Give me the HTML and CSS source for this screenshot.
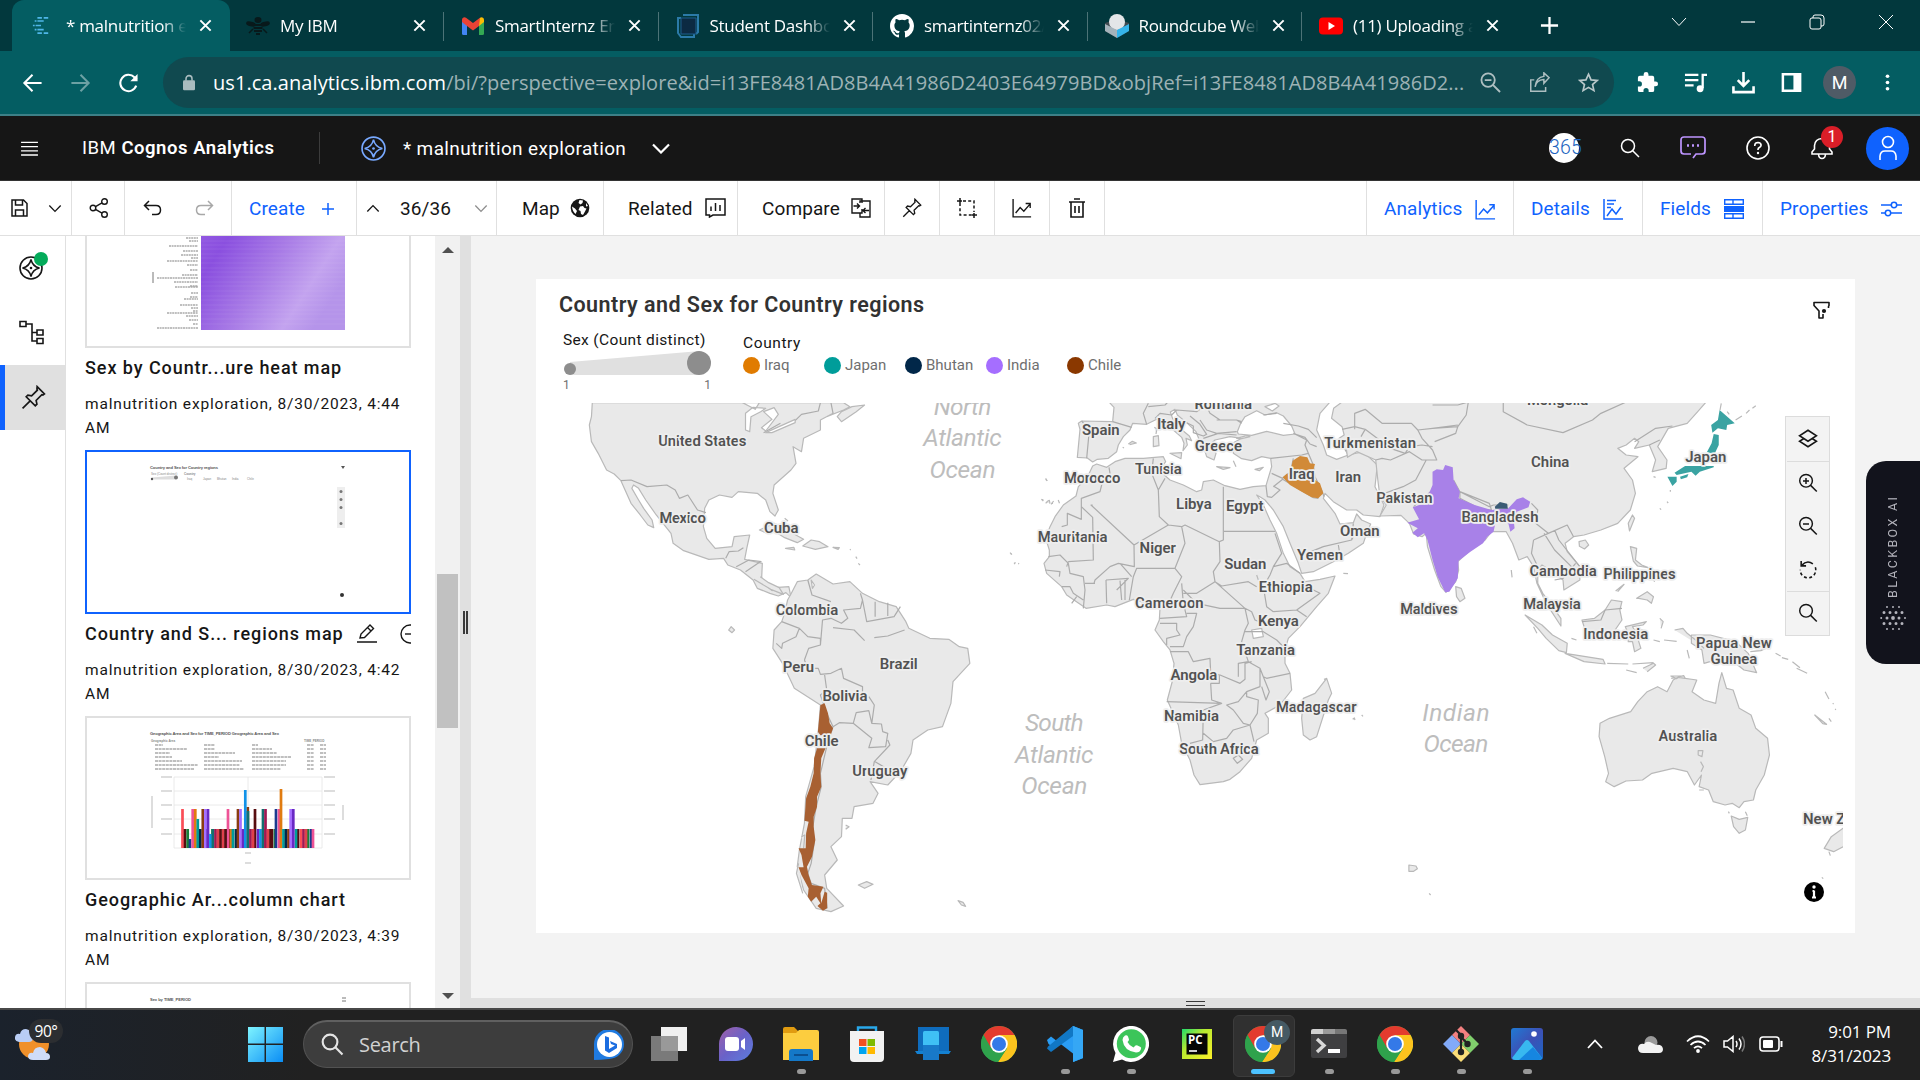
FILE: index.html
```html
<!DOCTYPE html>
<html lang="en">
<head>
<meta charset="utf-8">
<title>malnutrition exploration</title>
<link rel="stylesheet" href="styles.css">
</head>
<body>
<svg width="0" height="0" class="defs" aria-hidden="true">
  <defs>
    <linearGradient id="gWin" x1="0" y1="0" x2="1" y2="1"><stop offset="0" stop-color="#7ef4ff"/><stop offset="1" stop-color="#0a8df5"/></linearGradient>
    <linearGradient id="gChat" x1="0" y1="0" x2="1" y2="1"><stop offset="0" stop-color="#a05fa8"/><stop offset=".5" stop-color="#6a62c8"/><stop offset="1" stop-color="#5a7fe0"/></linearGradient>
    <linearGradient id="gPhoto" x1="0" y1="0" x2="1" y2="1"><stop offset="0" stop-color="#1f7ad4"/><stop offset=".5" stop-color="#3d50b5"/><stop offset="1" stop-color="#1a66c4"/></linearGradient>
    <linearGradient id="gPy" x1="0" y1="0" x2="1" y2="1"><stop offset="0" stop-color="#1edb6c"/><stop offset=".4" stop-color="#b8ea30"/><stop offset="1" stop-color="#fcf02a"/></linearGradient>
    <linearGradient id="gHeat" x1="0" y1="0" x2="1" y2=".65"><stop offset="0" stop-color="#9a62e4"/><stop offset=".3" stop-color="#8a4fdf"/><stop offset=".6" stop-color="#a87be6"/><stop offset=".85" stop-color="#c3a3ef"/><stop offset="1" stop-color="#b594ea"/></linearGradient>
    <symbol id="close" viewBox="0 0 16 16"><path d="M2.5 2.5l11 11M13.500 2.500l-11 11" stroke="currentColor" stroke-width="2.1" fill="none"/></symbol>
    <symbol id="explore" viewBox="0 0 24 24"><circle cx="12" cy="12" r="11" fill="none" stroke="currentColor" stroke-width="1.6"/><path d="M12 3.500Q13.500 10.500 20.500 12Q13.500 13.500 12 20.500Q10.500 13.500 3.500 12Q10.500 10.500 12 3.500z" fill="none" stroke="currentColor" stroke-width="1.5"/><circle cx="12" cy="12" r="1.300" fill="currentColor"/></symbol>
    <symbol id="pin" viewBox="0 0 24 24"><path d="M15.500 1.500l7 7-1.500 1.200-1-.4-5.500 5.500.8 3.600-1.600 1.600-8.700-8.700 1.600-1.600 3.600.8 5.500-5.500-.4-1zM9.300 14.700L1.500 22.500" fill="none" stroke="currentColor" stroke-width="1.6"/></symbol>
    <symbol id="mag" viewBox="0 0 20 20"><circle cx="8" cy="8" r="6.500" fill="none" stroke="currentColor" stroke-width="1.500"/><path d="M12.700 12.700L19 19" stroke="currentColor" stroke-width="1.500"/></symbol>
    <symbol id="down" viewBox="0 0 16 10"><path d="M1.500 1.500L8 8.300l6.500-6.800" fill="none" stroke="currentColor" stroke-width="1.500"/></symbol>
    <symbol id="trend" viewBox="0 0 22 22"><path d="M1.200 1v19.800H21M4 16.500l5-6 4 4 7-8M15 6h5v5" fill="none" stroke="currentColor" stroke-width="1.500"/></symbol>
    <symbol id="chrome" viewBox="0 0 36 36"><circle cx="18" cy="18" r="18" fill="#2fa24c"/><path d="M2.400 9A18 18 0 0 1 33.600 9L18 9 10.200 22.500z" fill="#e33b2e"/><path d="M33.600 9A18 18 0 0 1 17 36L25.800 22.500 18 9z" fill="#fcc31e"/><path d="M2.400 9A18 18 0 0 0 17 36L25.800 22.500H10.200z" fill="#2fa24c"/><circle cx="18" cy="18" r="8.800" fill="#fff"/><circle cx="18" cy="18" r="7" fill="#3479e8"/></symbol>
  </defs>
</svg>

<div class="screen">
  <header class="tabs">
    <div class="tab active">
      <svg class="fav" viewBox="0 0 20 20"><path d="M6 1.500h5M13 1.500h5M3 5h2M6 5h7M1 10h2M4 10h6M3 14.500h2M6 14.500h7M6 18.500h5M13 18.500h5" stroke="#4fb6e8" stroke-width="1.900"/></svg>
      <span class="name">* malnutrition exp</span><svg class="x"><use href="#close"/></svg>
    </div>
    <div class="tab"><svg class="fav" viewBox="0 0 24 20"><g fill="#08191b"><ellipse cx="12" cy="4" rx="3.500" ry="3"/><ellipse cx="5" cy="8" rx="5" ry="2.400" transform="rotate(15 5 8)"/><ellipse cx="19" cy="8" rx="5" ry="2.400" transform="rotate(-15 19 8)"/><path d="M8 8h8v2H8zM7.500 11h9v2h-9zM8 14h8v2H8zM10 17h4v2h-4z"/></g><path d="M7 13l-4 4M17 13l4 4" stroke="#08191b" stroke-width="1.500"/></svg><span class="name">My IBM</span><svg class="x"><use href="#close"/></svg></div>
    <div class="tab"><svg class="fav" viewBox="0 0 24 18"><path d="M1 3v13.500A1.500 1.500 0 0 0 2.500 18H6V7z" fill="#4285f4"/><path d="M23 3v13.500a1.500 1.500 0 0 1-1.500 1.500H18V7z" fill="#34a853"/><path d="M18 2.500V9l5-4V2.800C23 .6 20.600-.4 19 .8z" fill="#fbbc04"/><path d="M1 5V2.800C1 .6 3.400-.4 5 .8l7 5.300 7-5.300-1 8.200-6 4.500L6 9z" fill="#ea4335"/></svg><span class="name">SmartInternz Em</span><svg class="x"><use href="#close"/></svg></div>
    <div class="tab"><svg class="fav tall" viewBox="0 0 24 24"><path d="M7 1h15v17l-2 2M5 4H2v15l3 4h13v-3" fill="none" stroke="#2b7aa8" stroke-width="2"/><path d="M5 4h15v16H5z" fill="#0c2a42" stroke="#1d5c8c"/></svg><span class="name">Student Dashbo</span><svg class="x"><use href="#close"/></svg></div>
    <div class="tab"><svg class="fav tall" viewBox="0 0 16 16"><path fill="#fff" d="M8 0C3.580 0 0 3.580 0 8c0 3.540 2.290 6.530 5.470 7.590.4.070.55-.17.55-.38 0-.19-.01-.82-.01-1.490-2.010.37-2.530-.49-2.690-.94-.09-.23-.48-.94-.82-1.130-.28-.15-.68-.52-.01-.53.63-.01 1.080.58 1.230.82.72 1.210 1.870.87 2.330.66.070-.52.28-.87.51-1.070-1.780-.2-3.640-.89-3.640-3.950 0-.87.31-1.590.82-2.150-.08-.2-.36-1.020.08-2.120 0 0 .67-.21 2.200.82a7.600 7.600 0 0 1 4 0c1.530-1.040 2.200-.82 2.200-.82.44 1.100.16 1.920.08 2.120.51.56.82 1.270.82 2.150 0 3.070-1.870 3.750-3.650 3.950.29.25.54.73.54 1.480 0 1.070-.01 1.930-.01 2.200 0 .21.15.46.55.38A8 8 0 0 0 16 8c0-4.420-3.580-8-8-8z"/></svg><span class="name">smartinternz02/</span><svg class="x"><use href="#close"/></svg></div>
    <div class="tab"><svg class="fav tall" viewBox="0 0 24 24"><path d="M0 9l12-4 12 4v8l-12 7L0 17z" fill="#3f4a50"/><circle cx="12" cy="8" r="8" fill="#e4e6e8"/><path d="M0 10l12 6v8L0 17z" fill="#a5b3bb"/><path d="M24 10l-12 6v8l12-7z" fill="#35b4ea"/></svg><span class="name">Roundcube Web</span><svg class="x"><use href="#close"/></svg></div>
    <div class="tab"><svg class="fav" viewBox="0 0 24 17"><rect width="24" height="17" rx="4" fill="#f00"/><path d="M9.500 4.500v8l6.500-4z" fill="#fff"/></svg><span class="name">(11) Uploading a</span><svg class="x"><use href="#close"/></svg></div>
    <svg class="newtab" viewBox="0 0 20 20"><path d="M10 1v18M1 10h18" stroke="#fff" stroke-width="2.400"/></svg>
    <div class="winbtns">
      <svg viewBox="0 0 16 10"><path d="M1 1l7 7.500L15 1" fill="none" stroke="#fff"/></svg>
      <svg viewBox="0 0 16 10"><path d="M1 5h14" stroke="#fff" stroke-width="1.200"/></svg>
      <svg viewBox="0 0 16 16"><rect x="1" y="4" width="11" height="11" rx="2" fill="none" stroke="#fff"/><path d="M4 4V3q0-2 2-2h6q3 0 3 3v6q0 2-2 2h-1" fill="none" stroke="#fff"/></svg>
      <svg viewBox="0 0 16 16"><path d="M1 1l14 14M15 1L1 15" stroke="#fff"/></svg>
    </div>
  </header>

  <div class="addr">
    <svg class="nav" viewBox="0 0 22 22"><path d="M21 11H2M11 2l-9 9 9 9" fill="none" stroke="#fff" stroke-width="2.200"/></svg>
    <svg class="nav dim" viewBox="0 0 22 22"><path d="M1 11h19M11 2l9 9-9 9" fill="none" stroke="#fff" stroke-width="2.200"/></svg>
    <svg class="nav" viewBox="0 0 22 22"><path d="M19.500 14A9 9 0 1 1 17.500 4.700L20 7" fill="none" stroke="#fff" stroke-width="2.300"/><path d="M21 1v8h-8z" fill="#fff"/></svg>
    <div class="omni">
      <svg class="lock" viewBox="0 0 14 18"><rect y="6.500" width="14" height="11.500" rx="1.500" fill="#a9bcbf"/><path d="M3.500 7V4.500a3.500 3.500 0 0 1 7 0V7" fill="none" stroke="#a9bcbf" stroke-width="1.800"/></svg>
      <span class="url"><b>us1.ca.analytics.ibm.com</b>/bi/?perspective=explore&amp;id=i13FE8481AD8B4A41986D2403E64979BD&amp;objRef=i13FE8481AD8B4A41986D2...</span>
      <svg class="oi" viewBox="0 0 22 22"><circle cx="8.500" cy="8.500" r="7" fill="none" stroke="#aebfc1" stroke-width="1.900"/><path d="M13.500 13.500L21 21M5 8.500h7" stroke="#aebfc1" stroke-width="2"/></svg>
      <svg class="oi" viewBox="0 0 24 22"><path d="M6 8H2v13h17v-5M7 16q1-8 10-8.500V12l6-6.500L17 0v4Q8 5 7 16z" fill="none" stroke="#aebfc1" stroke-width="1.700"/></svg>
      <svg class="oi" viewBox="0 0 24 24"><path d="M12 2.500l2.900 6.500 7 .6-5.300 4.700 1.600 7-6.200-3.700-6.200 3.700 1.600-7L2.100 9.600l7-.6z" fill="none" stroke="#b9c8ca" stroke-width="1.900"/></svg>
    </div>
    <svg class="ext" viewBox="0 0 24 24"><path fill="#fff" d="M20.500 11H19V7a2 2 0 0 0-2-2h-4V3.500a2.500 2.500 0 0 0-5 0V5H4a2 2 0 0 0-2 2v3.800h1.500a2.700 2.700 0 0 1 0 5.400H2V20a2 2 0 0 0 2 2h3.800v-1.500a2.700 2.700 0 0 1 5.400 0V22H17a2 2 0 0 0 2-2v-4h1.500a2.500 2.500 0 0 0 0-5z"/></svg>
    <svg class="ext" viewBox="0 0 24 24"><path d="M1 4h14M1 9.500h14M1 15h9M19.500 18V4H24" fill="none" stroke="#fff" stroke-width="2.400"/><circle cx="16.800" cy="18.500" r="3.600" fill="#fff"/></svg>
    <svg class="ext" viewBox="0 0 24 24"><path d="M12 1v14M6 9.500l6 6 6-6M1.500 16v6h21v-6" fill="none" stroke="#fff" stroke-width="2.700"/></svg>
    <svg class="ext" viewBox="0 0 24 24"><path d="M3 3.500h18v17H3z" fill="none" stroke="#fff" stroke-width="2.600"/><path d="M14 3h7v18h-7z" fill="#fff"/></svg>
    <span class="me">M</span>
    <svg class="ext dots" viewBox="0 0 6 20"><circle cx="3" cy="2.500" r="2.200" fill="#fff"/><circle cx="3" cy="10" r="2.200" fill="#fff"/><circle cx="3" cy="17.500" r="2.200" fill="#fff"/></svg>
  </div>

  <div class="appbar">
    <svg class="ham" viewBox="0 0 18 16"><path d="M0 1.500h18M0 6h18M0 10.500h18M0 15h18" stroke="#fff" stroke-width="1.500"/></svg>
    <span class="brand">IBM <b>Cognos Analytics</b></span>
    <svg class="docicon"><use href="#explore"/></svg>
    <span class="doc">* malnutrition exploration</span>
    <svg class="docchev" viewBox="0 0 18 11"><path d="M1 1.500l8 8 8-8" fill="none" stroke="#fff" stroke-width="2.200"/></svg>
    <div class="appright">
      <span class="c365">365</span>
      <svg width="20" height="20"><use href="#mag"/></svg>
      <svg width="26" height="24" viewBox="0 0 26 24" class="lav"><path d="M13 22l3-4h6q3 0 3-3V4q0-3-3-3H4Q1 1 1 4v11q0 3 3 3h7" fill="none" stroke="currentColor" stroke-width="1.700"/><path d="M7 9.500h2M12 9.500h2M17 9.500h2" stroke="currentColor" stroke-width="2.500"/></svg>
      <svg width="24" height="24" viewBox="0 0 24 24"><circle cx="12" cy="12" r="11" fill="none" stroke="#fff" stroke-width="1.600"/><path d="M8.800 10V9q.3-2.500 3.200-2.500 3 .1 3.100 2.600-.1 1.600-1.700 2.300-1.400.6-1.400 2V14" fill="none" stroke="#fff" stroke-width="1.600"/><circle cx="12" cy="17" r="1.200" fill="#fff"/></svg>
      <span class="bell"><svg width="24" height="24" viewBox="0 0 24 24"><path d="M2 18v-2l2.500-3V9.500q.5-6.500 7.500-7 7 .5 7.500 7V13l2.500 3v2zM8.500 18.500q.5 4 3.500 4t3.500-4" fill="none" stroke="#fff" stroke-width="1.600"/></svg><i>1</i></span>
      <span class="avatar"><svg width="22" height="26" viewBox="0 0 22 26"><circle cx="11" cy="7" r="5.500" fill="none" stroke="#fff" stroke-width="1.600"/><path d="M3 25v-4q.5-5 5-5h6q4.500 0 5 5v4" fill="none" stroke="#fff" stroke-width="1.600"/></svg></span>
    </div>
  </div>

  <div class="toolbar">
    <div class="cell c-save"><svg width="17" height="18" viewBox="0 0 17 18"><path d="M1 1h11.500L16 4.500V17H1zM4.500 1v5h7V1M4.500 17v-6h8v6" fill="none" stroke="#161616" stroke-width="1.500"/></svg><svg width="14" height="9"><use href="#down"/></svg></div>
    <div class="cell c-share"><svg width="20" height="20" viewBox="0 0 20 20"><circle cx="4" cy="10" r="2.800" fill="none" stroke="#161616" stroke-width="1.400"/><circle cx="15.500" cy="3.500" r="2.800" fill="none" stroke="#161616" stroke-width="1.400"/><circle cx="15.500" cy="16.500" r="2.800" fill="none" stroke="#161616" stroke-width="1.400"/><path d="M6.500 8.600l6.500-3.700M6.500 11.400l6.500 3.700" stroke="#161616" stroke-width="1.400"/></svg></div>
    <div class="cell c-undo"><svg width="19" height="16" viewBox="0 0 19 16"><path d="M6 1L1.500 5.500 6 10M2 5.500h11q4.500 0 4.500 4.500t-4.500 4.500H9" fill="none" stroke="#161616" stroke-width="1.500"/></svg><svg width="19" height="16" viewBox="0 0 19 16" class="flip"><path d="M6 1L1.500 5.500 6 10M2 5.500h11q4.500 0 4.500 4.500t-4.500 4.500H9" fill="none" stroke="#a8a8a8" stroke-width="1.500"/></svg></div>
    <div class="cell c-create blue"><span>Create</span><svg width="12" height="12" viewBox="0 0 12 12"><path d="M6 0v12M0 6h12" stroke="currentColor" stroke-width="1.500"/></svg></div>
    <div class="cell c-count"><svg width="14" height="9" class="up"><use href="#down"/></svg><span>36/36</span><svg width="14" height="9" class="dis"><use href="#down"/></svg></div>
    <div class="cell c-map"><span>Map</span><svg width="20" height="20" viewBox="0 0 20 20"><circle cx="10" cy="10" r="9.300" fill="#161616"/><path d="M9.500 2l3.500.5-.5 2.500-2 1.500-2-1.500zM10 8.500l3-.5 1.500 2 2 .5-1.500 3-2 3.500-2-1-.5-3-2-1zM16 5l2 3-2 .5zM2 8.500l3 2 2 2.500-1.500 3Q2.500 13.500 2 8.500z" fill="#fff"/></svg></div>
    <div class="cell c-rel"><span>Related</span><svg width="21" height="20" viewBox="0 0 21 20"><path d="M1 1h19v16H8l-3.500 2v-2H1zM6 13V8.500M10.500 13V5M15 13V7" fill="none" stroke="#161616" stroke-width="1.500"/></svg></div>
    <div class="cell c-cmp"><span>Compare</span><svg width="20" height="20" viewBox="0 0 20 20"><path d="M11 5V1H1v14h10v-4M9 5V3h10v16H9v-4M2.500 8H8M6 5.500L8.500 8 6 10.500M18 12.500h-6M14.500 10L12 12.500l2.500 2.500" fill="none" stroke="#161616" stroke-width="1.400"/></svg></div>
    <div class="cell sq"><svg width="20" height="20"><use href="#pin"/></svg></div>
    <div class="cell sq"><svg width="20" height="20" viewBox="0 0 20 20"><path d="M3 5v12h12M6 3h11v11" fill="none" stroke="#161616" stroke-width="1.500" stroke-dasharray="3 2.200"/><path d="M0 3h5M3 0v5M15 17h5M17 15v5" fill="none" stroke="#161616" stroke-width="1.500"/></svg></div>
    <div class="cell sq"><svg width="20" height="20"><use href="#trend"/></svg></div>
    <div class="cell sq"><svg width="18" height="20" viewBox="0 0 18 20"><path d="M1 4h16M3 4v15h12V4M6 1h6M7 8v7M11 8v7" fill="none" stroke="#161616" stroke-width="1.600"/></svg></div>
    <div class="grow"></div>
    <div class="cell r r1 blue"><span>Analytics</span><svg width="21" height="21"><use href="#trend"/></svg></div>
    <div class="cell r r2 blue"><span>Details</span><svg width="20" height="21" viewBox="0 0 20 21"><path d="M1 0v20h19M4 1.500h9M4 5h7M4 8.500h4M4 17l5-7 4 5 5-7" fill="none" stroke="currentColor" stroke-width="1.500"/></svg></div>
    <div class="cell r r3 blue"><span>Fields</span><svg width="20" height="20" viewBox="0 0 20 20"><path d="M.7.700h18.600v4.500H.7zM9 1v4M.7 14.800h18.600v4.500H.7zM9 15v4" fill="none" stroke="currentColor" stroke-width="1.400"/><path d="M0 7h20v6H0z" fill="currentColor"/></svg></div>
    <div class="cell r r4 blue"><span>Properties</span><svg width="21" height="16" viewBox="0 0 21 16"><path d="M0 4h10M16 4h5M0 12h4M10 12h11" stroke="currentColor" stroke-width="1.500"/><circle cx="13" cy="4" r="2.700" fill="none" stroke="currentColor" stroke-width="1.500"/><circle cx="7" cy="12" r="2.700" fill="none" stroke="currentColor" stroke-width="1.500"/></svg></div>
  </div>

  <main class="main">
    <nav class="rail">
      <span class="rbtn dot"><svg width="24" height="24"><use href="#explore"/></svg></span>
      <span class="rbtn"><svg width="25" height="25" viewBox="0 0 25 25"><path d="M1 1.500h6v5H1zM18 10h6v5h-6zM18 18.500h6v5h-6zM7 4h6v17h5M13 12.500h5" fill="none" stroke="#161616" stroke-width="1.600"/></svg></span>
      <span class="rbtn sel"><svg width="25" height="25"><use href="#pin"/></svg></span>
    </nav>
    <section class="pins">
      <article>
        <svg class="thumb" viewBox="2 2 322 160"><rect x="116" width="144" height="146" fill="url(#gHeat)"/><path d="M116 57H260M116 61H260M116 65H260M116 70H260M116 74H260M116 79H260M116 84H260M116 88H260M116 93H260M116 98H260M116 102H260M116 107H260M116 112H260M116 116H260M116 121H260M116 126H260M116 130H260M116 135H260M116 140H260" stroke="#fff" stroke-opacity=".07"/><path d="M101 54h12M104 57h9M84 62h29M98 67h15M96 71h17M106 74h7M82 77h31M102 81h11M105 86h8M97 91h16M72 94h41M89 98h24M105 102h8M90 103h23M106 109h7M105 113h8M99 115h14M95 121h18M106 124h7M108 127h5M82 129h31M101 132h12M104 136h9M108 140h5M72 144h41" stroke="#aaa" stroke-width="1.400" stroke-dasharray="2 .6"/><path d="M68 88v11" stroke="#777"/></svg>
        <h3>Sex by Countr...ure heat map</h3><p>malnutrition exploration, 8/30/2023, 4:44<br>AM</p>
      </article>
      <article>
        <svg class="thumb sel" viewBox="2 2 322 160"><text x="65" y="18.500" class="tt" textLength="68">Country and Sex for Country regions</text><text x="66" y="25" class="ts">Sex (Count distinct)</text><text x="99" y="25" class="ts b">Country</text><path d="M67 27.500l24-2v4H67z" fill="#ddd"/><circle cx="67" cy="29" r="1.200" fill="#555"/><circle cx="91" cy="27.500" r="2" fill="#777"/><g class="ts"><text x="102" y="29.500">Iraq</text><text x="118" y="29.500">Japan</text><text x="132" y="29.500">Bhutan</text><text x="147" y="29.500">India</text><text x="162" y="29.500">Chile</text></g><path d="M256 16h4l-2 3z" fill="#555"/><path d="M252 37h8v41h-8z" fill="#eee"/><g fill="#777"><circle cx="256" cy="41.500" r="1.500"/><circle cx="256" cy="49.500" r="1.500"/><circle cx="256" cy="57.500" r="1.500"/><circle cx="256" cy="73.500" r="1.500"/></g><circle cx="257" cy="145" r="2" fill="#333"/></svg>
        <h3>Country and S... regions map <svg width="20" height="19" viewBox="0 0 20 19" class="pen"><path d="M0 18h20M3 14l1-4 9-9 3.500 3.500-9 9zM10.500 3.500L14 7" fill="none" stroke="#161616" stroke-width="1.400"/></svg><svg width="11" height="20" viewBox="0 0 11 20"><circle cx="10" cy="10" r="9" fill="none" stroke="#161616" stroke-width="1.400"/><path d="M5 10h6" stroke="#161616" stroke-width="1.400"/></svg></h3><p>malnutrition exploration, 8/30/2023, 4:42<br>AM</p>
      </article>
      <article>
        <svg class="thumb" viewBox="2 2 322 160"><text x="65" y="19" class="tt" textLength="129">Geographic Area and Sex for TIME_PERIOD Geographic Area and Sex</text><text x="66" y="26" class="ts b">Geographic Area</text><text x="219" y="26" class="ts b">TIME_PERIOD</text><path d="M70 29h8M119 29h11M167 29h6M222 29h7M235 29h6M70 33h32M119 33h11M167 33h20M222 33h7M235 33h6M70 37h15M119 37h31M167 37h25M222 37h7M235 37h6M70 41h17M119 41h15M167 41h39M222 41h7M235 41h6M70 45h27M119 45h38M167 45h34M222 45h7M235 45h6M70 49h43M119 49h36M167 49h34M222 49h7M235 49h6M70 53h39M119 53h40M167 53h29M222 53h7M235 53h6" stroke="#aaa" stroke-width="1.400" stroke-dasharray="3 .6"/><path d="M89 61h148M89 75h148M89 89h148M89 103h148M89 118h148M89 61v71h148V61M163 61v71" fill="none" stroke="#e4e4e4" stroke-width=".8"/><path d="M76 61h11M76 75h11M76 89h11M76 103h11M76 118h11M239 61h11M239 75h11M239 89h11M239 103h11M239 118h11M160 137h6M160 147h6M67 80v32M258 89v15" stroke="#bbb"/>
        <g stroke-width="2.700"><path d="M97.500 132V93M180 132V113M206 132V113M216 132V113" stroke="#fa4d56"/><path d="M100 132V113M110 132V113M145 132V113M170 132V93M187 132V113M213 132V113" stroke="#570d10"/><path d="M102.700 132V113M127.500 132V113M190 132V113M223 132V113" stroke="#198038"/><path d="M105 132V123M122 132V113M142.500 132V113M191 132V93M226 132V113" stroke="#1a3a8f"/><path d="M107.700 132V93M143 132V93M194 132V93M228 132V113" stroke="#ee5396"/><path d="M110.300 132V93M196 132V73M146 132V113" stroke="#e07b10"/><path d="M112.800 132V103M148 132V113M198.500 132V113M211 132V113" stroke="#009d9a"/><path d="M115.300 132V113M151 132V113M201 132V113" stroke="#012749"/><path d="M117.800 132V93M153 132V93M203.500 132V113M162.800 132V91" stroke="#8a3c10"/><path d="M120.400 132V93M155.500 132V93M205.700 132V93" stroke="#a56eff"/><path d="M123 132V93M158 132V113M208.300 132V93M173 132V113" stroke="#6929c4"/><path d="M125.500 132V118M160.300 132V74M175.500 132V113" stroke="#1192e8"/><path d="M128 132V113M163 132V95M178 132V93" stroke="#147070"/><path d="M130.500 132V113M165.500 132V113M180.500 132V93M218.500 132V113" stroke="#9f1853"/><path d="M133 132V113M138 132V113M168 132V113M183 132V113M221 132V113" stroke="#e0404c"/><path d="M135.500 132V113M140.500 132V113M185.500 132V113" stroke="#570d10"/></g></svg>
        <h3>Geographic Ar...column chart</h3><p>malnutrition exploration, 8/30/2023, 4:39<br>AM</p>
      </article>
      <article>
        <svg class="thumb" viewBox="2 2 322 160"><text x="65" y="19" class="tt" textLength="41">Sex by TIME_PERIOD</text><path d="M257 16h4M257 19h4" stroke="#777"/></svg>
      </article>
    </section>
    <div class="sbar"><i class="au"></i><i class="th"></i><i class="ad"></i></div>
    <div class="split"><i></i></div>
    <section class="work">
      <div class="canvas">
        <div class="card">
          <div class="chead"><h2>Country and Sex for Country regions</h2><svg width="17" height="19" viewBox="0 0 17 19"><path d="M15.500 7V5.500L16 4.500v-3H1v3l5 5.500v7h4v-4" fill="none" stroke="#161616" stroke-width="1.600" stroke-linejoin="round"/><circle cx="11" cy="10" r="2.100" fill="#161616"/></svg></div>
          <div class="legend">
            <div class="size"><span class="lt">Sex (Count distinct)</span>
              <svg width="150" height="26" viewBox="0 0 150 26"><path d="M7 12L137 1v24H7z" fill="#e0e0e0"/><circle cx="7" cy="19" r="6" fill="#8d8d8d"/><circle cx="136" cy="13" r="12" fill="#8d8d8d"/></svg>
              <div class="ends"><span>1</span><span>1</span></div></div>
            <div class="cats"><span class="lt">Country</span>
              <div class="items"><span class="k1">Iraq</span><span class="k2">Japan</span><span class="k3">Bhutan</span><span class="k4">India</span><span class="k5">Chile</span></div></div>
          </div>
          <svg class="map" viewBox="536 403 1307 530">
            <g class="land">
              <!-- North and Central America -->
              <g transform="translate(530 270) scale(.4209 .33333)">
                <path d="M148 398L146 440 141 465 146 515 162 550 182 600 200 612 216 632 240 700 262 735 280 765 294 773 290 750 270 715 258 690 242 655 246 645 258 655 275 690 300 735 335 790 340 820 365 842 425 868 460 865 470 885 500 900 530 930 540 955 570 970 590 978 608 968 620 982 615 950 590 952 575 962 550 935 552 880 510 868 515 835 522 795 485 800 480 830 440 835 420 805 412 770 415 715 425 690 450 675 480 682 495 665 540 670 560 690 570 725 582 738 590 720 577 670 580 645 620 600 632 580 625 530 645 545 650 505 690 480 690 450 720 430 705 440 745 420 760 410 745 398z"/>
                <path d="M730 440L740 425 765 410 795 405 775 425 740 455zM545 780l35-20 30 20 40 28-15 10-30-15-25-20-20 5zM648 828l20-18 20 5 20 15-30 8zM607 835l20-3 2 8zM720 832l15 1-3 5zM605 745l8 8M760 838l2 2M774 860l3 6M780 880l4 5M1225 625l4 8M1215 688l5 2M1225 700l8-8M1238 703l6-10M1255 690l3 10M1142 850l3 4M1150 880l2 2M1160 880l2 2"/>
                <path class="b" d="M216 632L240 630 278 650 325 645 345 660 355 685 375 675 398 720 418 728M465 865l8-20 22-2 12-10M490 890l30-20 30 5M512 905l35-30M535 930l20 2M690 398l-5 25-40 10-20 25-55 25M720 430l-5-32M595 460l-40 28"/>
                <path class="w" d="M512 430L530 412 560 415 548 425 525 440 522 485 512 480zM555 425l25-12 10 20-30 50-10-10 25-25zM560 488l70-40 0 10-55 30zM545 398h-40l30 20z"/>
              </g>
              <!-- South America -->
              <g transform="translate(530 580) scale(.4209 .33333)">
                <path d="M620 42L612 60 605 100 598 125 580 150 577 205 600 250 628 325 690 375 686 440 675 560 655 650 652 730 640 810 635 860 650 930 680 985 715 995 745 978 705 925 700 885 730 840 715 800 740 770 742 715 765 715 770 680 815 670 827 640 808 605 850 615 880 575 905 520 910 480 945 450 980 440 1000 370 1005 305 1045 250 1040 205 1020 200 995 178 950 175 900 145 893 125 870 80 830 65 790 40 760 5 720 12 680-18 660 0 635 5z"/>
                <path d="M472 150l6-10 8 10-6 8zM532-2l40 30 30 15-10-20-25-15-20-18M780 915l20-10 15 8-20 12zM1017 962l12 5 6 12-10-4zM750 735l8 5-8 8M638 850l-5 30 15 60M645 770l8-5-3 40"/>
                <path class="b" d="M660 0L670 45 715 65M598 125L640 145 632 170 600 190 598 205 585 190M640 145L660 170 690 175 690 195 662 205 652 240M690 195L695 120 715 115 740 130 755 115 745 90 785 85 790 60 785 40M790 60L800 125 865 110 880 80M820 65v45M850 68v40M652 240L660 265 685 265 690 283 715 280 740 265 745 295 790 320 790 345M700 285L705 330 690 345 705 400 720 440M805 350L818 375 812 430M720 440L735 428 768 430 775 398 805 392 812 430 835 432 838 455 850 460 845 500 805 503 812 475 768 430M850 480L855 495 818 545 810 600M820 545L860 575M720 440L705 500 690 580 692 620 680 680 672 740 675 790 668 850 660 880 668 910 700 925 706 985"/>
                <path class="b" d="M720 143L770 150 795 182M818 173L850 168 890 150"/>
                <path class="w2" d="M668 0l8 15-5 10z"/>
                <path fill="#a86032" stroke="none" d="M690 375L700 370 708 400 712 430 720 445 715 462 690 466 684 455zM682 505h20L692 535 690 580 692 620 682 650 682 680 674 710 674 740 678 780 670 830 658 860 662 885 670 915 697 920 690 940 692 970 700 935 706 938V985L696 992 683 978 690 970 680 950 668 965 660 950 662 925 645 885 638 862 650 862 645 825 638 805 655 805 656 760 662 725 652 722 656 655 666 620 674 580 675 535z"/>
              </g>
              <!-- Europe, Africa, Middle East -->
              <g transform="translate(1000 390) scale(.33333)">
                <path d="M327 36L342 52 338 95 245 93 235 100 240 118 232 202 262 204 278 216 292 208 325 205 350 185 355 165 370 140 390 120 398 100 440 103 470 88 482 85 495 103 520 120 545 142 552 160 549 182 562 165 558 145 575 152 568 138 540 115 520 92 511 66 525 58 532 75 560 98 588 125 598 150 612 175 620 200 642 210 648 190 630 165 645 150 690 140 725 145 700 158 700 190 725 206 755 212 785 200 812 205 815 230 806 260 798 287 760 290 720 298 675 287 640 270 610 275 605 300 590 305 550 285 510 270 493 255 485 232 497 215 490 200 430 205 375 205 345 215 320 232 290 222 278 228 262 262 235 290 228 318 190 345 165 380 150 410 137 445 148 480 148 500 132 520 140 550 185 590 200 615 258 655 320 645 345 650 400 628 440 640 480 655 478 690 465 720 490 755 510 780 522 820 518 870 502 930 535 1005 545 1060 570 1110 582 1155 600 1184 670 1175 690 1168 720 1145 755 1105 770 1050 805 1030 805 985 795 970 840 945 875 900 870 850 855 820 855 780 865 745 900 710 950 650 985 610 1005 558 960 568 915 575 900 550 870 530 850 490 830 430 810 390 790 345 770 315 782 322 795 330 820 360 850 410 870 460 895 520 905 550 940 545 1000 515 1045 490 1090 460 1100 430 1112 402 1085 390 1070 372 1060 398 1020 402 1005 370 970 325 975 310 1000 335 1040 360 1070 360 1090 375 1140 380 1152 345 1125 290 1132 225 1090 185 1045 195 1010 208 980 195 970 165 950 120 960 70 990 36z"/>
                <path d="M460 140l15-3 2 30-17 3zM463 112l8 5-3 15M510 190l35-2-2 18zM385 162l12-8 12 5-20 5M368 172l4 2M650 230l40 3-20 5zM765 238l25-6-12 10zM910 925L945 910 980 865 995 910 985 930 950 1040 930 1050 910 1035 905 985zM1058 988l5-4 2 6M1085 975l4 4M1030 550l14 1M137 268l4 4M125 328l5 5M140 335l8-4 2 10M155 340l4 0M30 488l4 4M42 520l5-2M700 212l8 18"/>
                <path class="w" d="M712 125L722 100 735 80 770 62 795 75 830 68 850 78 875 108 885 132 850 136 800 124 755 136 715 132zM795 50l30-10 12 8-20 15zM755 720l30-5 5 25-30 5zM770 555l5 15M710 145l30-8 10 3-25 6z"/>
                <path class="b" d="M245 93L268 120 260 205M338 95L395 112M440 103L430 70 445 40M465 85l15-15 35 5 15-15 60 5 40-30M445 50l50-5 10-10M560 98l20 10 0 20 30 10 10-5-20-30-30-25M600 90l20 30 30 10 60-5M650 90l60 0 15 10M610 30l20 40 30 20M725 95l-15-5M610 145l45-15 55 5M790 75l40-5M812 205L905 195 925 190 915 165 920 150 880 130M850 100l45 8 30 10 25 25M885 132l30 10 15 20 20 8M925 190L940 225 945 260 965 300 972 320M815 250L848 265M848 265L872 245 880 205M820 290L848 268 940 323 955 325M798 287L802 320 815 322 840 300 820 288M1045 195L1020 155M970 470L1055 450 1060 400M970 470L920 490 900 500M1055 450L1070 420M1015 465L1020 495M327 232L330 250 305 285 300 305 244 325V345 388L202 370V405L185 410M278 345h-5L402 465 403 530 355 520 330 530 285 570 282 580M278 382L280 510 205 515M244 350L278 382M402 465L505 405 478 380 475 300 455 250 460 205M475 300L495 265M505 405L545 410 555 405 658 455 670 450V290M658 455L660 515 640 545 645 575 590 610 550 610M545 410L555 460 525 535 410 535 400 560 388 630M525 535L545 560 520 610 500 655M672 424H825M825 430L845 490 820 530 810 555 790 590 800 650 820 665M820 530L860 520 900 550M645 575L665 588 745 575 770 590M645 575L735 655 755 665M735 655L660 655 590 640 550 600M545 580L550 640 560 680 480 685M560 670L590 670 580 710 560 740 550 770 510 770M480 700h50v20l10 15-40 10 0 20M510 785H565L580 815 630 805 632 850 660 855 720 880 735 868 735 820 755 815M632 880H658V855M632 880L635 930 665 940 500 935M665 940L610 960 608 1050 570 1060M735 655L745 700 735 720 725 755 745 815 780 835 790 860 800 865 870 850M735 725L790 725 830 750 860 780M820 665L890 660 920 680M890 660L960 610 920 590M755 665L765 690 790 700M745 815L715 820 715 860M780 835L780 890 740 905 740 920 775 930 772 970 750 1005 730 1000 700 960 680 945 715 935 740 905M790 860L808 905 798 930 785 890M610 1030L640 1055 680 1045 700 1020 750 1005 762 1055M700 1105L715 1095 728 1108 712 1120zM135 540L180 545 178 560M145 500L180 495 205 520 210 550 250 560 255 600 250 655M205 515L200 530M185 590L210 590 220 610 250 630M318 570L320 640M318 570L385 565 350 600M360 572L365 630M375 570V630M285 580L255 580M360 520L395 560M230 620L215 640"/>
                <path fill="#d18a38" stroke="none" d="M878 212L900 198 922 202 930 220 945 222 940 240 872 242zM848 262L862 250 870 270H945L960 280 970 310 955 325 935 322 905 305 870 285z"/>
              </g>
              <!-- Asia -->
              <g transform="translate(1180 380) scale(.4209 .33333)">
                <path d="M385 66L365 85 360 115 385 140 390 165 378 175 395 205 398 232 420 215 465 240 470 300 475 350 490 375 475 408 525 406 545 430 555 462 575 470 585 460 588 500 605 570 620 620 632 637 655 605 662 570 660 545 690 510 725 480 740 455 775 455 790 490 805 540 825 530 840 560 848 610 870 670 905 738 905 715 885 680 862 640 850 610 850 570 860 555 885 575 910 600 912 630 950 600 950 560 920 515 915 490 935 470 960 465 1000 450 1040 430 1070 390 1082 340 1075 300 1055 265 1088 230 1060 225 1040 205 1060 195 1080 175 1090 185 1080 205 1115 195 1130 240 1122 275 1155 265 1157 240 1135 200 1160 145 1205 130 1230 95 1250 66z"/>
                <path d="M655 620L668 625 677 655 665 665 657 650zM787 570l2 22M948 485l15-5 8 15-10 12-12-8zM1065 430l10-25 5 10-12 38zM1070 500l15 5-3 35 15 15 20 10-5-2-25-5-10-15zM1085 655l25-20 15 15-5 20-10-10-20-5zM1098 580l18 5-8 10M1120 595l8 10M1035 633l20-20-15 22M820 705L860 735 885 765 920 790 918 818 900 812 870 775 850 745zM955 720L985 715 1010 690 1025 660 1050 665 1045 690 1050 720 1020 775 965 760zM1058 740l50-15-8 10-25 5 5 10 20 0-15 15 10 40-15 10-5-30-10 0-2-30zM1140 715l8 10-5 20M1125 780l15 5M1150 780l30 4M1175 750l20-5 10 15 20 20 20 25M1215 765L1260 765 1320 785 1350 820 1370 878 1340 870 1300 830 1245 850 1240 810 1215 790zM1355 815l25-3 20-12M1415 820l12 8M1430 833l15 5M1455 845l18 18M1465 865l25 15M915 820L1005 838 1010 852 960 845zM1015 850l50 2M1075 852l50-4M1060 870l25 8M1100 865l25-15 5 5-20 20M930 775l12 5M840 740l8 20M1167 895l30-8 5 12M1205 810l5 25M1300 95l5 8M1283 90l3-20M1320 120l15-12M1345 100l8-10M1360 85l8-8M1125 290l5 2M1165 330v5M1140 385l3 4M1157 365l3 4M342 898l6-2"/>
                <path class="b" d="M415 148V100L440 88 480 130 550 130 565 150 600 145 660 135M385 148L415 140 440 148 500 205 535 220 545 200 575 195 600 200M440 148L430 170M565 150L575 175 600 210 610 240 585 240 560 300 530 320 475 345M465 240L480 235 500 240 545 215 575 240 610 240M600 145L660 140 655 160 605 185M600 75L660 75 685 66M685 66L680 105 660 140M768 66V95L825 135 910 158 980 120 1000 100 1060 66M650 300L665 335 735 380 745 375 780 375M555 380L600 330 610 290M665 335L735 370 740 390 715 388 665 355zM835 370L850 390 845 430 875 460 920 435 935 470M840 480L835 520 850 560M875 460L840 480M865 460L890 510 930 560 915 575M890 450L900 480 950 560M890 600l20-5 30-45M955 725L1000 720 1010 690 1050 685M1080 185L1130 145 1170 138M1115 195L1140 180"/>
                <path fill="#a881e8" stroke="none" d="M600 275L610 268 625 270 630 255 648 262 650 300 665 335 662 355 700 375 740 390 780 385 800 358 815 352 832 365 828 382 800 395 792 415 795 445 785 455 780 430 750 425 745 455 730 470 720 490 690 515 662 542 660 595 652 612 640 635 630 637 612 590 600 540 588 480 580 460 565 472 552 458 565 445 540 428 568 418 553 382 575 372 590 345 600 315z"/>
                <path d="M748 380l12-14 17 5 2 15h-30z" fill="#3a5a74" stroke="none"/>
                <path fill="#3aa3a2" stroke="none" d="M1282 90L1318 130 1300 135 1298 150 1278 145 1265 158 1262 135 1278 120zM1268 162L1280 165 1280 195 1270 222 1252 216 1263 190zM1175 278L1200 258H1268V262L1235 275 1225 287 1215 275 1180 285zM1158 290L1180 290 1180 305 1170 318zM1188 290L1208 282 1205 292 1190 298z"/>
              </g>
              <!-- Oceania -->
              <g transform="translate(1180 640) scale(.47194 .33333)">
                <path d="M890 250L910 235 955 215 970 185 990 155 1012 140 1032 155 1045 120 1055 112 1095 120 1085 155 1110 180 1135 190 1142 130 1148 98 1158 145 1172 150 1185 205 1210 225 1220 265 1245 295 1249 345 1238 405 1220 450 1215 480 1195 485 1185 503 1170 490 1155 495 1130 485 1120 450 1100 440 1105 405 1090 435 1075 395 1045 385 1000 400 980 420 945 423 920 440 902 425 908 400 900 350 888 290zM1168 528L1185 538 1203 532 1198 570 1185 580 1173 560zM1405 565L1380 590 1365 625 1385 635 1405 620 1420 600zM1040 108l20 0-8 8zM1345 225l25 28-8-2zM1367 155l8 22M1375 235l5 10M1388 207l2 2M1383 190l2 2M485 675l15 3 3 8-8 8-10 0zM528 760l3 5M1360 712l3 4M1098 332l10 0-2 18-8-5zM1103 365l6 15-5 15M1100 450l10 0M1162 515l2 5M1198 515l4 12M1375 635l3 12"/>
              </g>
            </g>
            <g class="sea" transform="scale(1.2245)"><text x="786" y="339" textLength="47">North</text><text x="786" y="364.500" textLength="64">Atlantic</text><text x="786" y="390.500" textLength="54">Ocean</text><text x="861" y="597" textLength="48">South</text><text x="861" y="623" textLength="64">Atlantic</text><text x="861" y="648.500" textLength="54">Ocean</text><text x="1189" y="589" textLength="55">Indian</text><text x="1189" y="614.500" textLength="53">Ocean</text></g>
            <g class="lbl" transform="translate(0 -.6) scale(1.2245)">
              <text x="573.500" y="365" textLength="72">United States</text><text x="557.500" y="428" textLength="38">Mexico</text><text x="638" y="435.500">Cuba</text><text x="659" y="502.500" textLength="51">Colombia</text><text x="734" y="546.500">Brazil</text><text x="652" y="549">Peru</text><text x="690" y="573">Bolivia</text><text x="671" y="609.500">Chile</text><text x="718.500" y="634" textLength="45">Uruguay</text>
              <text x="899" y="356">Spain</text><text x="956.500" y="350.500">Italy</text><text x="999" y="334.500" textLength="47">Romania</text><text x="995" y="368.500" textLength="38.500">Greece</text><text x="946" y="388" textLength="38">Tunisia</text><text x="892" y="395" textLength="46">Morocco</text><text x="975" y="416">Libya</text><text x="1016.500" y="418">Egypt</text><text x="876" y="443.500" textLength="57">Mauritania</text><text x="945.500" y="452">Niger</text><text x="1017" y="465">Sudan</text><text x="1078" y="458" textLength="37.500">Yemen</text><text x="1110.500" y="438">Oman</text><text x="1050" y="484" textLength="44">Ethiopia</text><text x="955" y="497" textLength="56">Cameroon</text><text x="1044" y="512">Kenya</text><text x="1033.500" y="535.500" textLength="48">Tanzania</text><text x="975" y="556">Angola</text><text x="973" y="589" textLength="45">Namibia</text><text x="995.500" y="616.500" textLength="65">South Africa</text><text x="1075" y="582" textLength="66">Madagascar</text>
              <text x="1063" y="392">Iraq</text><text x="1101" y="394">Iran</text><text x="1119" y="366" textLength="75">Turkmenistan</text><text x="1147" y="411.500" textLength="46">Pakistan</text><text x="1225" y="426.500" textLength="63">Bangladesh</text><text x="1266" y="382">China</text><text x="1272" y="331" textLength="50">Mongolia</text><text x="1393" y="378">Japan</text><text x="1167" y="502" textLength="47">Maldives</text><text x="1276.500" y="470.500" textLength="55">Cambodia</text><text x="1339" y="473" textLength="59">Philippines</text><text x="1267.500" y="498" textLength="47">Malaysia</text><text x="1319.500" y="522" textLength="53">Indonesia</text><text x="1416" y="529.500" textLength="62">Papua New</text><text x="1416" y="543">Guinea</text><text x="1378.500" y="606" textLength="48">Australia</text><text x="1472.500" y="673.500" class="st">New Zealand</text>
            </g>
          </svg>
          <div class="mctl">
            <svg width="20" height="19" viewBox="0 0 20 19"><path d="M10 1l8.500 5.500L10 12 1.500 6.500zM5.500 9.500L1.500 12 10 17.500l8.500-5.500-4-2.500" fill="none" stroke="#161616" stroke-width="1.500"/></svg>
            <svg width="20" height="20" class="tl"><use href="#mag"/><path d="M8 5v6M5 8h6" stroke="#161616" stroke-width="1.500"/></svg>
            <svg width="20" height="20"><use href="#mag"/><path d="M5 8h6" stroke="#161616" stroke-width="1.500"/></svg>
            <svg width="20" height="20" viewBox="0 0 20 20"><path d="M3.500 5.500Q9-.5 15 4" fill="none" stroke="#161616" stroke-width="1.600"/><path d="M3 1v5h5" fill="none" stroke="#161616" stroke-width="1.600"/><path d="M17.500 7.500A8 8 0 1 1 2 10" fill="none" stroke="#161616" stroke-width="1.600" stroke-dasharray="3 2.500"/></svg>
            <svg width="20" height="20" class="tl"><use href="#mag"/></svg>
          </div>
          <svg class="info" viewBox="0 0 20 20"><circle cx="10" cy="10" r="10"/><path d="M10 8.500V16M8.500 9H10M8 15.500h4" stroke="#fff" stroke-width="2.200"/><circle cx="10" cy="5" r="1.700" fill="#fff"/></svg>
        </div>
        <div class="bbox"><span>BLACKBOX AI</span><svg width="26" height="26" viewBox="0 0 26 26"><g stroke="#b4b4bc" stroke-linecap="round" stroke-width="3"><path d="M7 2h0M13 2h0M19 2h0M7 24h0M13 24h0M19 24h0M1.200 13h0M25 13h0" stroke-width="2"/><path d="M4 7.500h0M10 7.500h0M16 7.500h0M22 7.500h0M7 13h0M19 13h0M4 18.500h0M10 18.500h0M16 18.500h0M22 18.500h0"/><path d="M13 13h0" stroke-width="3.800"/></g></svg></div>
      </div>
      <div class="hsplit"><i></i></div>
    </section>
  </main>

  <footer class="task">
    <div class="wx"><svg width="42" height="42" viewBox="0 0 42 42"><circle cx="19" cy="22" r="15" fill="#f0902a"/><path d="M4 20q-5-1-4-5 1-4 5-3 1-5 6-5 5 1 5 6 3 1 2 4-1 3-4 3z" fill="#b9cdf5"/><path d="M18 38q-5 0-5-4 1-4 5-3 1-6 7-6 5 1 6 6 4 0 4 4 0 3-4 3z" fill="#cfdcf8"/></svg><span>90°</span></div>
    <svg class="win" viewBox="0 0 36 36"><path d="M0 0h17v17H0zM18.500 0H36v17H18.500zM0 18.500h17V36H0zM18.500 18.500H36V36H18.500z" fill="url(#gWin)"/></svg>
    <div class="search"><svg width="23" height="23" class="m"><g transform="scale(1.130)"><circle cx="8" cy="8" r="6.500" fill="none" stroke="#e4e4e4" stroke-width="1.900"/><path d="M12.700 12.700L19 19" stroke="#e4e4e4" stroke-width="1.900"/></g></svg><span>Search</span><svg width="30" height="30" viewBox="0 0 30 30"><path d="M0 30V14A15 15 0 1 1 15 29q-8 1-15 1z" fill="#1f7ae0"/><circle cx="15.500" cy="14.500" r="12.500" fill="#fff"/><path d="M11 6l4 1.500V19l6-3.500-4-1.500-1-3 7 3v4l-8 5-4-2.500z" fill="#1b6de0"/></svg></div>
    <div class="apps">
      <span><svg viewBox="0 0 36 36"><path d="M10 1h26v24H10z" fill="#f0f0f0"/><path d="M0 10h27v25H0z" fill="#8a8a8a" fill-opacity=".85"/></svg></span>
      <span><svg viewBox="0 0 36 36"><path d="M2 35V18A17 17 0 1 1 18 35z" fill="url(#gChat)"/><rect x="8" y="11" width="14" height="14" rx="3" fill="#fff"/><path d="M24 15l4-3v12l-4-3z" fill="#fff"/></svg></span>
      <span class="run"><svg viewBox="0 0 36 36"><path d="M0 3q0-2 2-2h9l4 4v6H0z" fill="#e09b10"/><path d="M0 7h13l3-3h18q2 0 2 2v28H0z" fill="#fccd3f"/><path d="M6 35V26q0-3 3-3h18q3 0 3 3v9z" fill="#1478c8"/><path d="M11 29h14" stroke="#0b4f90" stroke-width="2"/></svg></span>
      <span><svg viewBox="0 0 36 36"><path d="M9 8V1.500h18V8" fill="none" stroke="#29a8ea" stroke-width="2.400"/><path d="M1 5h34v27q0 4-4 4H5q-4 0-4-4z" fill="#f2f2f2"/><path d="M10 13h7.500v7H10z" fill="#f25022"/><path d="M18.500 13H26v7h-7.500z" fill="#7fba00"/><path d="M10 21h7.500v7H10z" fill="#00a4ef"/><path d="M18.500 21H26v7h-7.500z" fill="#ffb900"/></svg></span>
      <span><svg viewBox="0 0 36 36"><path d="M3 1h31v24H3z" fill="#0f6cbd"/><path d="M0 25h36l-2 3H2z" fill="#1481d2"/><rect x="8" y="5" width="16" height="29" rx="1.500" fill="#3fc0f5"/><path d="M8 19h16v15H8z" fill="#1879c9"/></svg></span>
      <span><svg><use href="#chrome"/></svg></span>
      <span class="run"><svg viewBox="0 0 36 36"><path d="M26 0L5 20.500 1.500 18 0 14l4-3.500 22 17V36l10-4V4z" fill="#2a9df4"/><path d="M26 36l10-4V4L26 0v10L4 26l-4-3.500 1-2L26 0z" fill="#1177c4"/><path d="M26 0l10 4v28l-10 4z" fill="#35a7f5"/></svg></span>
      <span class="run"><svg viewBox="0 0 36 36"><path d="M0 36l2.500-9A18 18 0 1 1 9 33.500z" fill="#fff"/><circle cx="18.300" cy="17.700" r="14.500" fill="#3cc55a"/><path d="M12 9.500q2-1 3 1l1 3q0 1-1.500 2.500 2 4 6 5.500l2-2q1-.7 2 0l3 1.500q1 .7.500 2-1 3.500-5 3.500-12-1.500-13.500-12.500 0-3 2.500-4.500z" fill="#fff"/></svg></span>
      <span><svg viewBox="0 0 36 36"><path d="M3 3h30v30H3z" fill="url(#gPy)"/><path d="M7.500 7.500h21v21h-21z" fill="#050505"/><text x="9" y="18" class="pc">PC</text><path d="M10 25h8" stroke="#fff" stroke-width="1.600"/></svg></span>
      <span class="run cur"><svg><use href="#chrome"/></svg><em>M</em></span>
      <span class="run"><svg viewBox="0 0 36 36"><rect y="4" width="36" height="28" rx="2" fill="#3f3f41"/><path d="M0 5q0-2 2-2h10v5H0z" fill="#d0d0d0"/><path d="M12 3h12v5H12z" fill="#9a9a9a"/><path d="M24 3h10q2 0 2 2v3H24z" fill="#777"/><path d="M6 13l7 6.500L6 26" fill="none" stroke="#d8d8d8" stroke-width="3.400"/><path d="M17 25h12" stroke="#fff" stroke-width="4"/></svg></span>
      <span class="run"><svg><use href="#chrome"/></svg></span>
      <span class="run"><svg viewBox="0 0 36 36"><path d="M18 0l9 9-9 9-9-9z" fill="#f28080"/><path d="M9 9l9 9-9 9-9-9z" fill="#82aaf8"/><path d="M27 9l9 9-9 9-9-9z" fill="#80cf6c"/><path d="M18 18l9 9-9 9-9-9z" fill="#fadd78"/><path d="M12 3l6 6v18M18 11l6 6" stroke="#222" stroke-width="2.200" fill="none"/><circle cx="18" cy="10" r="3.200" fill="#222"/><circle cx="24.500" cy="18" r="3.200" fill="#222"/><circle cx="18" cy="26" r="3.200" fill="#222"/></svg></span>
      <span class="run"><svg viewBox="0 0 36 36"><rect x="2" y="2" width="32" height="32" rx="3" fill="url(#gPhoto)"/><path d="M3 32l13-17q2-2 4 0l13 17q-1 2-3 2H6q-2 0-3-2z" fill="#38b8f0"/><path d="M10 34l14-13 9 11q-1 2-3 2z" fill="#1686e0"/><circle cx="25" cy="8" r="2.800" fill="#fff"/></svg></span>
    </div>
    <div class="tray">
      <svg width="16" height="10" viewBox="0 0 16 10"><path d="M1 9l7-7.500L15 9" fill="none" stroke="#fff" stroke-width="1.800"/></svg>
      <svg width="25" height="17" viewBox="0 0 25 17"><circle cx="13" cy="6.500" r="6.500" fill="#9a9a9a"/><path d="M5 17q-5 0-5-5 1-5 6-4 3-4 8-1l4 2q6-1 7 4 0 4-4 4z" fill="#f2f2f2"/></svg>
      <svg width="24" height="18" viewBox="0 0 24 18"><path d="M1 6.500Q12-4 23 6.500M4.500 10Q12 3 19.500 10M8 13.200q4-3.700 8 0" fill="none" stroke="#fff" stroke-width="1.700"/><circle cx="12" cy="16" r="1.900" fill="#fff"/></svg>
      <svg width="22" height="18" viewBox="0 0 22 18"><path d="M1 6h3.500L10 1.500v15L4.500 12H1zM13 6q2 3 0 6M16 3.500q4 5.500 0 11" fill="none" stroke="#fff" stroke-width="1.500"/><path d="M19 1.500q5 7.500 0 15" fill="none" stroke="#777" stroke-width="1.500"/></svg>
      <svg width="24" height="16" viewBox="0 0 24 16"><rect x="1" y="1" width="19" height="14" rx="3" fill="none" stroke="#fff" stroke-width="1.600"/><rect x="4" y="4" width="10" height="8" rx="1" fill="#fff"/><path d="M22.500 5v6" stroke="#fff" stroke-width="2"/></svg>
      <div class="clock">9:01 PM<br>8/31/2023</div>
    </div>
  </footer>
</div>
</body>
</html>
```
FILE: styles.css
```css
*{box-sizing:border-box}
body{margin:0;background:#f3f3f3}
.defs{position:absolute}
.screen{width:1920px;height:1080px;display:flex;flex-direction:column;overflow:hidden;font-family:Roboto,"Liberation Sans",sans-serif;color:#161616}
svg{display:block;flex:none}
span{white-space:nowrap}

/* browser tab strip */
.tabs{height:51px;background:#02383d;display:flex;align-items:center;padding-left:12px;font-family:"Open Sans","Noto Sans",sans-serif;color:#fff}
.tab{width:214.5px;height:51px;display:flex;align-items:center;padding-left:20px;position:relative}
.tab.active{width:218px;background:#045d62;border-radius:12px 12px 0 0}
.tab.active+.tab{width:213px;padding-left:16px}
.tab+.tab+.tab::before{content:"";position:absolute;left:0;top:12px;width:1px;height:29px;background:#4c7377}
.tab+.tab+.tab{padding-left:18px}
.fav{width:24px;height:20px;margin-right:10px}
.active .fav{width:18px;margin-right:16px}
.tab.active .fav{height:21px}
.fav.tall{height:24px}
.name{width:120px;overflow:hidden;font-size:17px;letter-spacing:-.3px;-webkit-mask-image:linear-gradient(90deg,#000 80%,transparent);mask-image:linear-gradient(90deg,#000 80%,transparent)}
.x{width:15px;height:15px;margin-left:12px;color:#fff}
.newtab{width:19px;height:19px;margin-left:24px}
.winbtns{margin-left:auto;display:flex;align-items:center;gap:53px;padding:0 26px 8px 0}
.winbtns svg{width:16px}

/* address bar */
.addr{height:65px;background:#045d62;border-bottom:2px solid #3d8087;display:flex;align-items:center;padding:0 0 0 22px}
.nav{width:21px;height:20px;margin-right:27px}
.nav.dim{opacity:.42}
.omni{width:1451px;height:51px;margin-left:-3px;border-radius:26px;background:#10494f;display:flex;align-items:center;padding-left:20px;gap:28px}
.lock{width:12px;height:17px;margin-right:-10px}
.url{width:1254px;margin-right:-15px;overflow:hidden;color:#9db2b5;font:20px "Open Sans","Noto Sans",sans-serif;letter-spacing:.06px}
.url b{font-weight:400;color:#fff}
.oi{width:21px;height:21px}
.ext{width:23px;height:23px;margin-left:25px}
.omni+.ext{margin-left:22px}
.me{width:33px;height:33px;border-radius:50%;background:#4f5b66;color:#fff;font-size:18px;line-height:33px;text-align:center;margin-left:20px}
.ext.dots{width:5px;height:19px;margin-left:29px}

/* application header */
.appbar{height:65px;background:#161616;border-bottom:1px solid #333;display:flex;align-items:center;color:#fff;font-size:18px}
.ham{width:17px;height:15px;margin-left:21px}
.brand{width:238px;margin-left:44px;height:32px;line-height:32px;border-right:1px solid #3c3c3c;font-size:18.500px;letter-spacing:.53px}
.brand b{font-weight:600}
.docicon{width:25px;height:25px;margin-left:41px;color:#78a9ff}
.doc{width:232px;margin-left:17px;font-size:19px;letter-spacing:.36px}
.docchev{width:18px;height:11px;margin-left:17px}
.appright{margin-left:auto;display:flex;align-items:center;padding-right:11px}
.c365{width:30px;height:30px;border-radius:50%;background:#fff;color:#1c63c0;font-size:19.500px;font-weight:300;letter-spacing:.2px;line-height:30px;margin-right:41px}
.appright>svg{margin-right:40px}
.appright>svg.lav{color:#be95ff}
.bell{position:relative;margin-right:32px}
.bell i{position:absolute;left:11px;top:-10px;width:22px;height:22px;border-radius:50%;background:#da1e28;font:16px/22px Roboto,sans-serif;text-align:center}
.avatar{width:43px;height:43px;border-radius:50%;background:#0f62fe;display:flex;align-items:center;justify-content:center}

/* action toolbar */
.toolbar{height:55px;background:#fff;border-bottom:1px solid #e0e0e0;display:flex;font-size:19px}
.cell{display:flex;align-items:center;border-right:1px solid #e0e0e0;flex:none}
.cell span{letter-spacing:.1px}
.blue{color:#0f62fe}
.blue svg{position:relative;top:1px}
.c-save{width:72px;padding-left:11px;gap:20px}
.c-share{width:53px;padding-left:17px}
.c-undo{width:107px;padding-left:18px;gap:33px}
.flip{transform:scaleX(-1)}
.c-create{width:125px;padding-left:17px;gap:14px}
.c-create span{width:59px}
.c-count{width:140px;padding-left:9px}
.c-count span{width:53px;margin:0 21px 0 20px}
.up{transform:scaleY(-1)}
.dis{color:#8d8d8d}
.c-map{width:107px;padding-left:25px}
.c-map span{width:48px}
.c-rel{width:134px;padding-left:24px}
.c-rel span{width:77px}
.c-cmp{width:147px;padding-left:24px}
.c-cmp span{width:89px}
.sq{width:55px;justify-content:center}
.grow{flex:1}
.r{border-right:0;border-left:1px solid #e0e0e0;padding-left:17px}
.r1{width:147px}.r1 span{width:91px}
.r2{width:129px}.r2 span{width:72px}
.r3{width:120px}.r3 span{width:64px}
.r4{width:158px}.r4 span{width:101px}

/* body */
.main{height:772px;display:flex}
.rail{width:66px;background:#fff;border-right:1px solid #e0e0e0}
.rbtn{height:65px;display:flex;align-items:center;justify-content:center;position:relative;color:#161616}
.rbtn{padding-right:3px}
.rbtn.dot{height:64px}
.rbtn.sel{background:#e0e0e0;border-left:5px solid #0f62fe;padding:0 3px 0 0}
.dot::after{content:"";position:absolute;left:34px;top:16px;width:14px;height:14px;border-radius:50%;background:#04ab5a}
.pins{width:369px;background:#fff;padding-left:19px;overflow:hidden}
.pins article{height:266px}
.pins article:first-child{margin-top:-52px}
.thumb{width:326px;height:164px;border:2px solid #e0e0e0}
.thumb.sel{border-color:#0f62fe}
.tt{font:bold 4.100px "Liberation Sans",sans-serif;fill:#555}
.ts{font:3px "Liberation Sans",sans-serif;fill:#888}
.ts.b{font-weight:bold}
.pins h3{margin:7px 0 0;height:25px;width:326px;overflow:hidden;white-space:nowrap;font-size:18px;font-weight:500;line-height:24px;letter-spacing:.93px;display:flex;align-items:center}
.pins h3 .pen{margin:0 23px 0 auto}
.pins p{margin:12px 0 0;font-size:15.500px;line-height:24px;letter-spacing:.83px;white-space:nowrap}
.sbar{width:25px;background:#f1f1f1;display:flex;flex-direction:column;align-items:center}
.au{border:6px solid transparent;border-top:0;border-bottom-color:#505050;margin-top:11px}
.th{width:21px;height:154px;margin-top:321px;background:#c1c1c1}
.ad{border:6px solid transparent;border-bottom:0;border-top-color:#505050;margin:auto 0 9px}
.split{width:11px;background:#e0e0e0;display:flex;justify-content:center}
.split i{width:5px;height:23px;margin-top:375px;border:solid #393939;border-width:0 2px}
.work{flex:1;display:flex;flex-direction:column}
.canvas{flex:1;background:#f3f3f3;display:flex}
.hsplit{height:10px;background:#e0e0e0;display:flex;padding:3px 0 0 715px}
.hsplit i{width:19px;height:5px;border:solid #393939;border-width:1.500px 0}
.card{width:1319px;height:654px;margin:43px 0 0 65px;background:#fff;position:relative}
.chead{display:flex;justify-content:space-between;padding:13px 25px 0 23px;height:44px}
.chead h2{margin:0;font-size:21.500px;font-weight:600;line-height:26px;color:#323232;letter-spacing:.45px}
.chead svg{margin-top:9px}
.legend{display:flex;height:80px;padding-left:27px}
.size{width:180px;padding-top:7px}
.lt{display:block;font-size:15.500px;line-height:20px;letter-spacing:.35px}
.ends{display:flex;justify-content:space-between;width:148px;font-size:12px;color:#6f6f6f;line-height:16px;padding-top:1px}
.cats{padding-top:10px}
.cats .lt{letter-spacing:.6px}
.items{display:flex;padding-top:4px}
.items span{width:81px;font-size:15px;line-height:17px;color:#6f6f6f;display:flex;gap:4px}
.items span::before{content:"";width:17px;height:17px;border-radius:50%;background:currentColor;flex:none}
.k1::before{color:#e07b00}.k2::before{color:#009d9a}.k3::before{color:#012749}.k4::before{color:#a56eff}.k5::before{color:#8a3800}
.map{width:1307px;height:530px}
.land path{fill:#e9e9e9;stroke:#b9b9b9;stroke-width:1.200px;vector-effect:non-scaling-stroke;stroke-linejoin:round}
.land path[stroke=none]{stroke:none}
.land path[fill="#a86032"]{fill:#a86032}
.land path[fill="#d18a38"]{fill:#d18a38}
.land path[fill="#a881e8"]{fill:#a881e8}
.land path[fill="#3a5a74"]{fill:#3a5a74}
.land path[fill="#3aa3a2"]{fill:#3aa3a2}
.land path.b{fill:none;stroke:#acacac}
.land path.w,.land path.w2{fill:#fff}
.lbl{font-size:12.200px;font-weight:600;fill:#525252;stroke:#eee;stroke-width:2.800px;stroke-linejoin:round;paint-order:stroke;text-anchor:middle}
.lbl .st{text-anchor:start}
.sea{font-size:20px;font-style:italic;fill:#bdbdbd;text-anchor:middle}
.mctl{position:absolute;left:1249px;top:137px;width:45px;height:220px;background:#f3f3f3;border:1px solid #dcdcdc;display:flex;flex-direction:column;align-items:center}
.mctl svg{height:19.500px;padding:12px 0;box-sizing:content-box;overflow:visible}
.mctl .tl{border-top:1px solid #dcdcdc;width:20px;padding:11px 11px 12px}
.info{position:absolute;left:1268px;top:603px;width:20px;height:20px}
.bbox{width:54px;height:203px;margin:225px 0 0 auto;background:#12131c;border-radius:20px 0 0 20px;display:flex;flex-direction:column;align-items:center;padding-top:30px;color:#b4b4bc}
.bbox span{writing-mode:vertical-rl;transform:rotate(180deg);font-size:12.500px;line-height:16px;letter-spacing:2.350px;height:107px}
.bbox svg{margin-top:7px}

/* taskbar */
.task{height:72px;background:linear-gradient(90deg,#1b222c 0,#212121 16%,#212121);border-top:2px solid #484848;display:flex;align-items:center;color:#fff;font-family:"Open Sans","Noto Sans",sans-serif}
.wx{width:233px;padding:0 0 4px 15px;position:relative}
.wx span{position:absolute;left:29px;top:-3px;width:34px;height:24px;border-radius:12px;background:#2c2e31;font-size:15.500px;line-height:24px;text-align:center;letter-spacing:-.5px}
.win{width:35px;height:35px;margin:-2px 20px 0 15px}
.search{width:330px;height:48px;margin-top:-2px;border-radius:24px;background:#3d3d3d;border:1px solid #525252;border-top:2px solid #606060;display:flex;align-items:center;padding:0 8px 0 17px;font-size:20px;color:#d2d2d2}
.search .m{margin-right:15px}
.search span{flex:1;letter-spacing:-.3px}
.apps{display:flex;margin-left:3px}
.apps span{width:66px;height:60px;display:flex;align-items:center;justify-content:center;position:relative}
.apps svg{width:36px;height:36px;margin-top:-3px}
.run::after{content:"";position:absolute;left:29px;bottom:1px;width:9px;height:5px;border-radius:3px;background:#999}
.cur::before{content:"";position:absolute;left:3px;top:0;width:60px;height:60px;border-radius:6px;background:#303030;border:1px solid #3c3c3c}
.cur svg{position:relative}
.cur.run::after{left:21px;width:24px;background:#4cc2ff}
.cur em{position:absolute;left:34px;top:5px;width:26px;height:25px;border-radius:50%;background:#455a64;font:14px/25px Roboto,sans-serif;text-align:center}
.pc{font:bold 11.500px "Open Sans",sans-serif;fill:#fff}
.tray{display:flex;align-items:center;margin-left:auto;padding:0 29px 2px 0}
.tray svg:nth-child(1){margin-right:35px}
.tray svg:nth-child(2){margin-right:23px}
.tray svg:nth-child(3){margin-right:13px}
.tray svg:nth-child(4){margin-right:14px}
.clock{width:108px;text-align:right;font-size:17px;line-height:24px;letter-spacing:-.1px}
```
